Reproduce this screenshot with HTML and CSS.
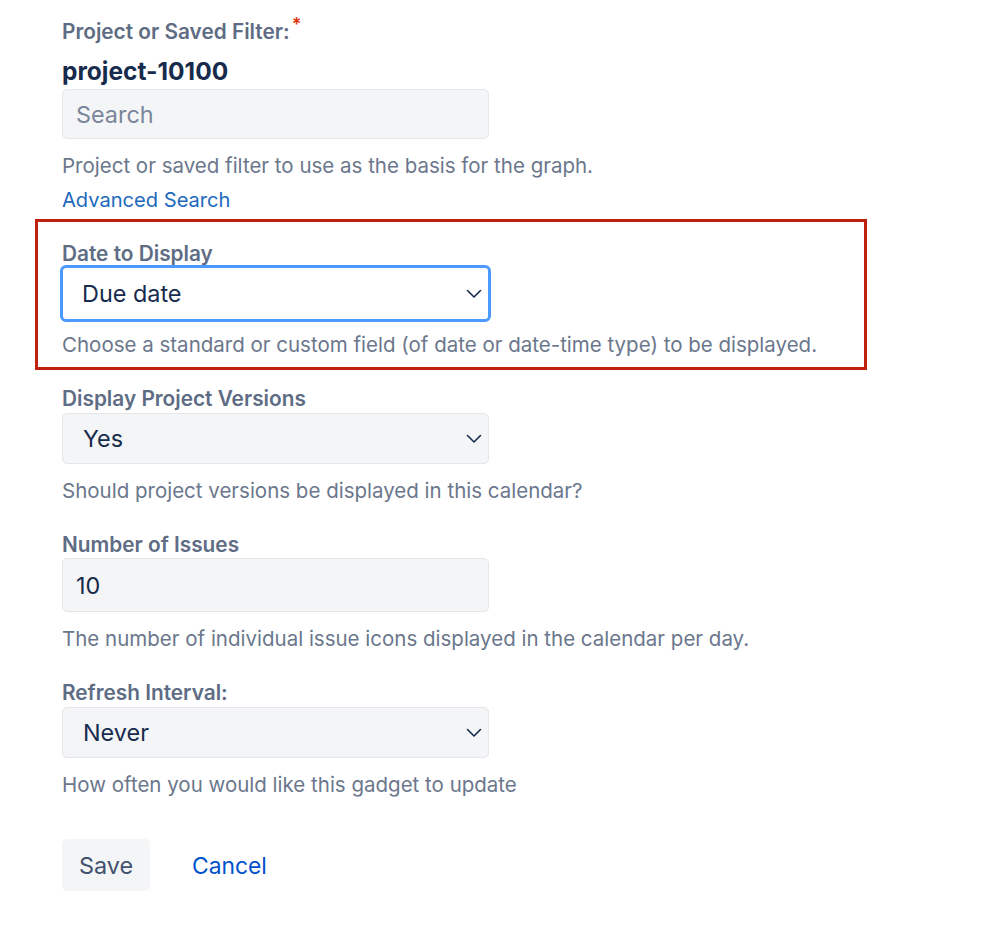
FILE: index.html
```html
<!DOCTYPE html>
<html>
<head>
<meta charset="utf-8">
<link rel="stylesheet" href="styles.css">
</head>
<body>
<form class="form">
  <div class="field field-first">
    <div class="label">Project or Saved Filter:<span class="req">*</span></div>
    <div class="project">project-10100</div>
    <div class="input placeholder">Search</div>
    <div class="help">Project or saved filter to use as the basis for the graph.</div>
    <a class="adv">Advanced Search</a>
  </div>
  <div class="highlight">
    <div class="label">Date to Display</div>
    <div class="select select-focus">
      <span>Due date</span>
      <svg class="chev" width="16" height="10" viewBox="0 0 16 10"><path d="M1.5 1.5 L8 8 L14.5 1.5" fill="none" stroke="#172B4D" stroke-width="1.6" stroke-linecap="round" stroke-linejoin="round"/></svg>
    </div>
    <div class="help">Choose a standard or custom field (of date or date-time type) to be displayed.</div>
  </div>
  <div class="field field-versions">
    <div class="label">Display Project Versions</div>
    <div class="select">
      <span>Yes</span>
      <svg class="chev" width="16" height="10" viewBox="0 0 16 10"><path d="M1.5 1.5 L8 8 L14.5 1.5" fill="none" stroke="#172B4D" stroke-width="1.6" stroke-linecap="round" stroke-linejoin="round"/></svg>
    </div>
    <div class="help">Should project versions be displayed in this calendar?</div>
  </div>
  <div class="field field-gap">
    <div class="label">Number of Issues</div>
    <div class="input value">10</div>
    <div class="help">The number of individual issue icons displayed in the calendar per day.</div>
  </div>
  <div class="field field-gap">
    <div class="label">Refresh Interval:</div>
    <div class="select">
      <span>Never</span>
      <svg class="chev" width="16" height="10" viewBox="0 0 16 10"><path d="M1.5 1.5 L8 8 L14.5 1.5" fill="none" stroke="#172B4D" stroke-width="1.6" stroke-linecap="round" stroke-linejoin="round"/></svg>
    </div>
    <div class="help">How often you would like this gadget to update</div>
  </div>
  <div class="buttons">
    <div class="btn-save">Save</div>
    <a class="btn-cancel">Cancel</a>
  </div>
</form>
</body>
</html>
```

FILE: styles.css
```css
html, body {
  margin: 0;
  padding: 0;
  background: #ffffff;
}
body {
  font-family: Inter, "Noto Sans", sans-serif;
  color: #172B4D;
}
.form {
  width: 999px;
  padding: 18px 0 0 62px;
  box-sizing: border-box;
  display: flex;
  flex-direction: column;
}
.field {
  display: flex;
  flex-direction: column;
  align-items: flex-start;
}
.label {
  font-size: 20.8px;
  font-weight: 600;
  color: #5E6C84;
  line-height: 28px;
  height: 28px;
}
.req {
  color: #DE350B;
  font-size: 18px;
  position: relative;
  top: -8px;
  left: 2px;
}
.project {
  font-size: 24.5px;
  font-weight: 700;
  color: #172B4D;
  line-height: 30px;
  height: 30px;
  margin-top: 10px;
}
.input, .select {
  width: 427px;
  box-sizing: border-box;
  background: #F4F5F7;
  border: 1px solid #E4E6EA;
  border-radius: 5px;
  font-size: 23.4px;
  display: flex;
  align-items: center;
}
.input {
  height: 50px;
  padding-left: 13px;
}
.placeholder {
  color: #7A869A;
  margin-top: 3px;
}
.value {
  color: #172B4D;
  height: 54px;
  margin-top: -1px;
}
.select {
  height: 51px;
  padding: 0 6px 0 20px;
  justify-content: space-between;
  color: #172B4D;
}
.help {
  font-size: 20.5px;
  color: #6B778C;
  line-height: 26px;
  height: 26px;
  margin-top: 14px;
}
.adv {
  font-size: 20.1px;
  color: #2069BD;
  line-height: 26px;
  height: 26px;
  margin-top: 8px;
}
.highlight {
  margin: 6px 0 0 -27px;
  width: 832px;
  height: 151px;
  box-sizing: border-box;
  border: 3px solid #C0200E;
  padding: 19px 0 0 24px;
  display: flex;
  flex-direction: column;
  align-items: flex-start;
}
.highlight .label {
  line-height: 26px;
  height: 26px;
}
.select-focus {
  width: 431px;
  height: 57px;
  margin-left: -2px;
  margin-top: -2px;
  background: #ffffff;
  border: 3px solid #4C9AFF;
  border-radius: 6px;
  padding: 0 6px 0 19px;
}
.highlight .help {
  margin-top: 10px;
}
.field-versions {
  margin-top: 15px;
}
.field-gap {
  margin-top: 27px;
}
.field-gap:last-of-type .select {
  height: 50px;
}
.buttons {
  margin-top: 41px;
  display: flex;
  align-items: center;
  gap: 42px;
}
.btn-save {
  width: 88px;
  height: 52px;
  background: #F4F5F7;
  border-radius: 5px;
  display: flex;
  align-items: center;
  justify-content: center;
  font-size: 23.4px;
  color: #42526E;
}
.btn-cancel {
  font-size: 22.8px;
  color: #0052CC;
}
```
